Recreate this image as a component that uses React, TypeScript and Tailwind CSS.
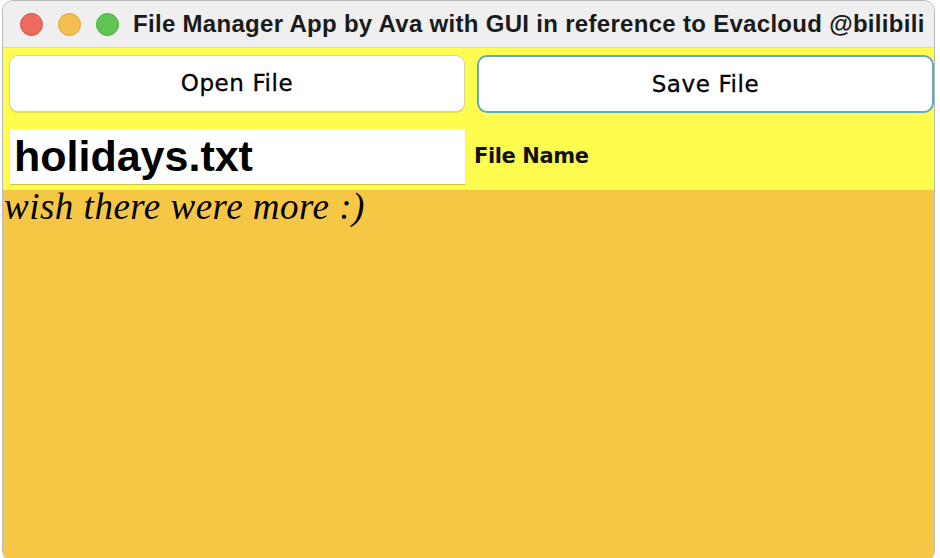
export default function App() {
  return (
    <div className="w-[940px] h-[558px] bg-white overflow-hidden">
      <div className="ml-[2px] w-[933px] h-[562px] flex flex-col rounded-[11px] border border-[#b9b9b9] overflow-hidden">
        {/* title bar */}
        <div className="h-[47px] shrink-0 flex items-center bg-[#efefef] border-b border-[#d6d6d6]">
          <div className="flex items-center gap-[15px] pl-[17px]">
            <span className="w-[23px] h-[23px] rounded-full bg-[#ec6a5e] border border-[#d2524a]" />
            <span className="w-[23px] h-[23px] rounded-full bg-[#f4bf4f] border border-[#d9a43a]" />
            <span className="w-[23px] h-[23px] rounded-full bg-[#61c554] border border-[#4fa842]" />
          </div>
          <div className="ml-[14px] text-[24px] font-bold text-[#1a1a1a] whitespace-nowrap tracking-[0.3px] font-['Liberation_Sans',Arial,sans-serif]">
            File Manager App by Ava with GUI in reference to Evacloud @bilibili
          </div>
        </div>

        {/* top panel */}
        <div className="shrink-0 bg-[#fffc50] flex flex-col pt-[7px] pb-[6px] pl-[6px] pr-0">
          <div className="flex gap-[12px]">
            <button className="w-[456px] h-[57px] bg-white rounded-[9px] border border-[#d8d69a] shadow-[0_1px_1px_rgba(0,0,0,0.12)] text-[23px] text-black font-['DejaVu_Sans',sans-serif] tracking-[0.6px] [-webkit-text-stroke:0.3px_black]">
              Open File
            </button>
            <button className="w-[457px] h-[58px] bg-white rounded-[10px] border-2 border-[#62a9b9] text-[23px] text-black font-['DejaVu_Sans',sans-serif] tracking-[0.6px] [-webkit-text-stroke:0.3px_black]">
              Save File
            </button>
          </div>
          <div className="flex items-center mt-[16px]">
            <div className="ml-[1px] w-[455px] h-[55px] bg-white flex items-center shadow-[0_1px_1px_rgba(0,0,0,0.2)] pl-[4px]">
              <span className="text-[43px] font-bold text-black leading-none font-['Liberation_Sans',Arial,sans-serif]">
                holidays.txt
              </span>
            </div>
            <span className="ml-[9px] text-[21px] font-bold text-[#111] font-['DejaVu_Sans',sans-serif] tracking-[-0.4px]">
              File Name
            </span>
          </div>
        </div>

        {/* text area */}
        <div className="flex-1 bg-[#f6c745]">
          <p className="pl-[1px] text-[37px] italic text-black leading-[34px] tracking-[0.5px] font-['Liberation_Serif','Times_New_Roman',serif]">
            wish there were more :)
          </p>
        </div>
      </div>
    </div>
  );
}
